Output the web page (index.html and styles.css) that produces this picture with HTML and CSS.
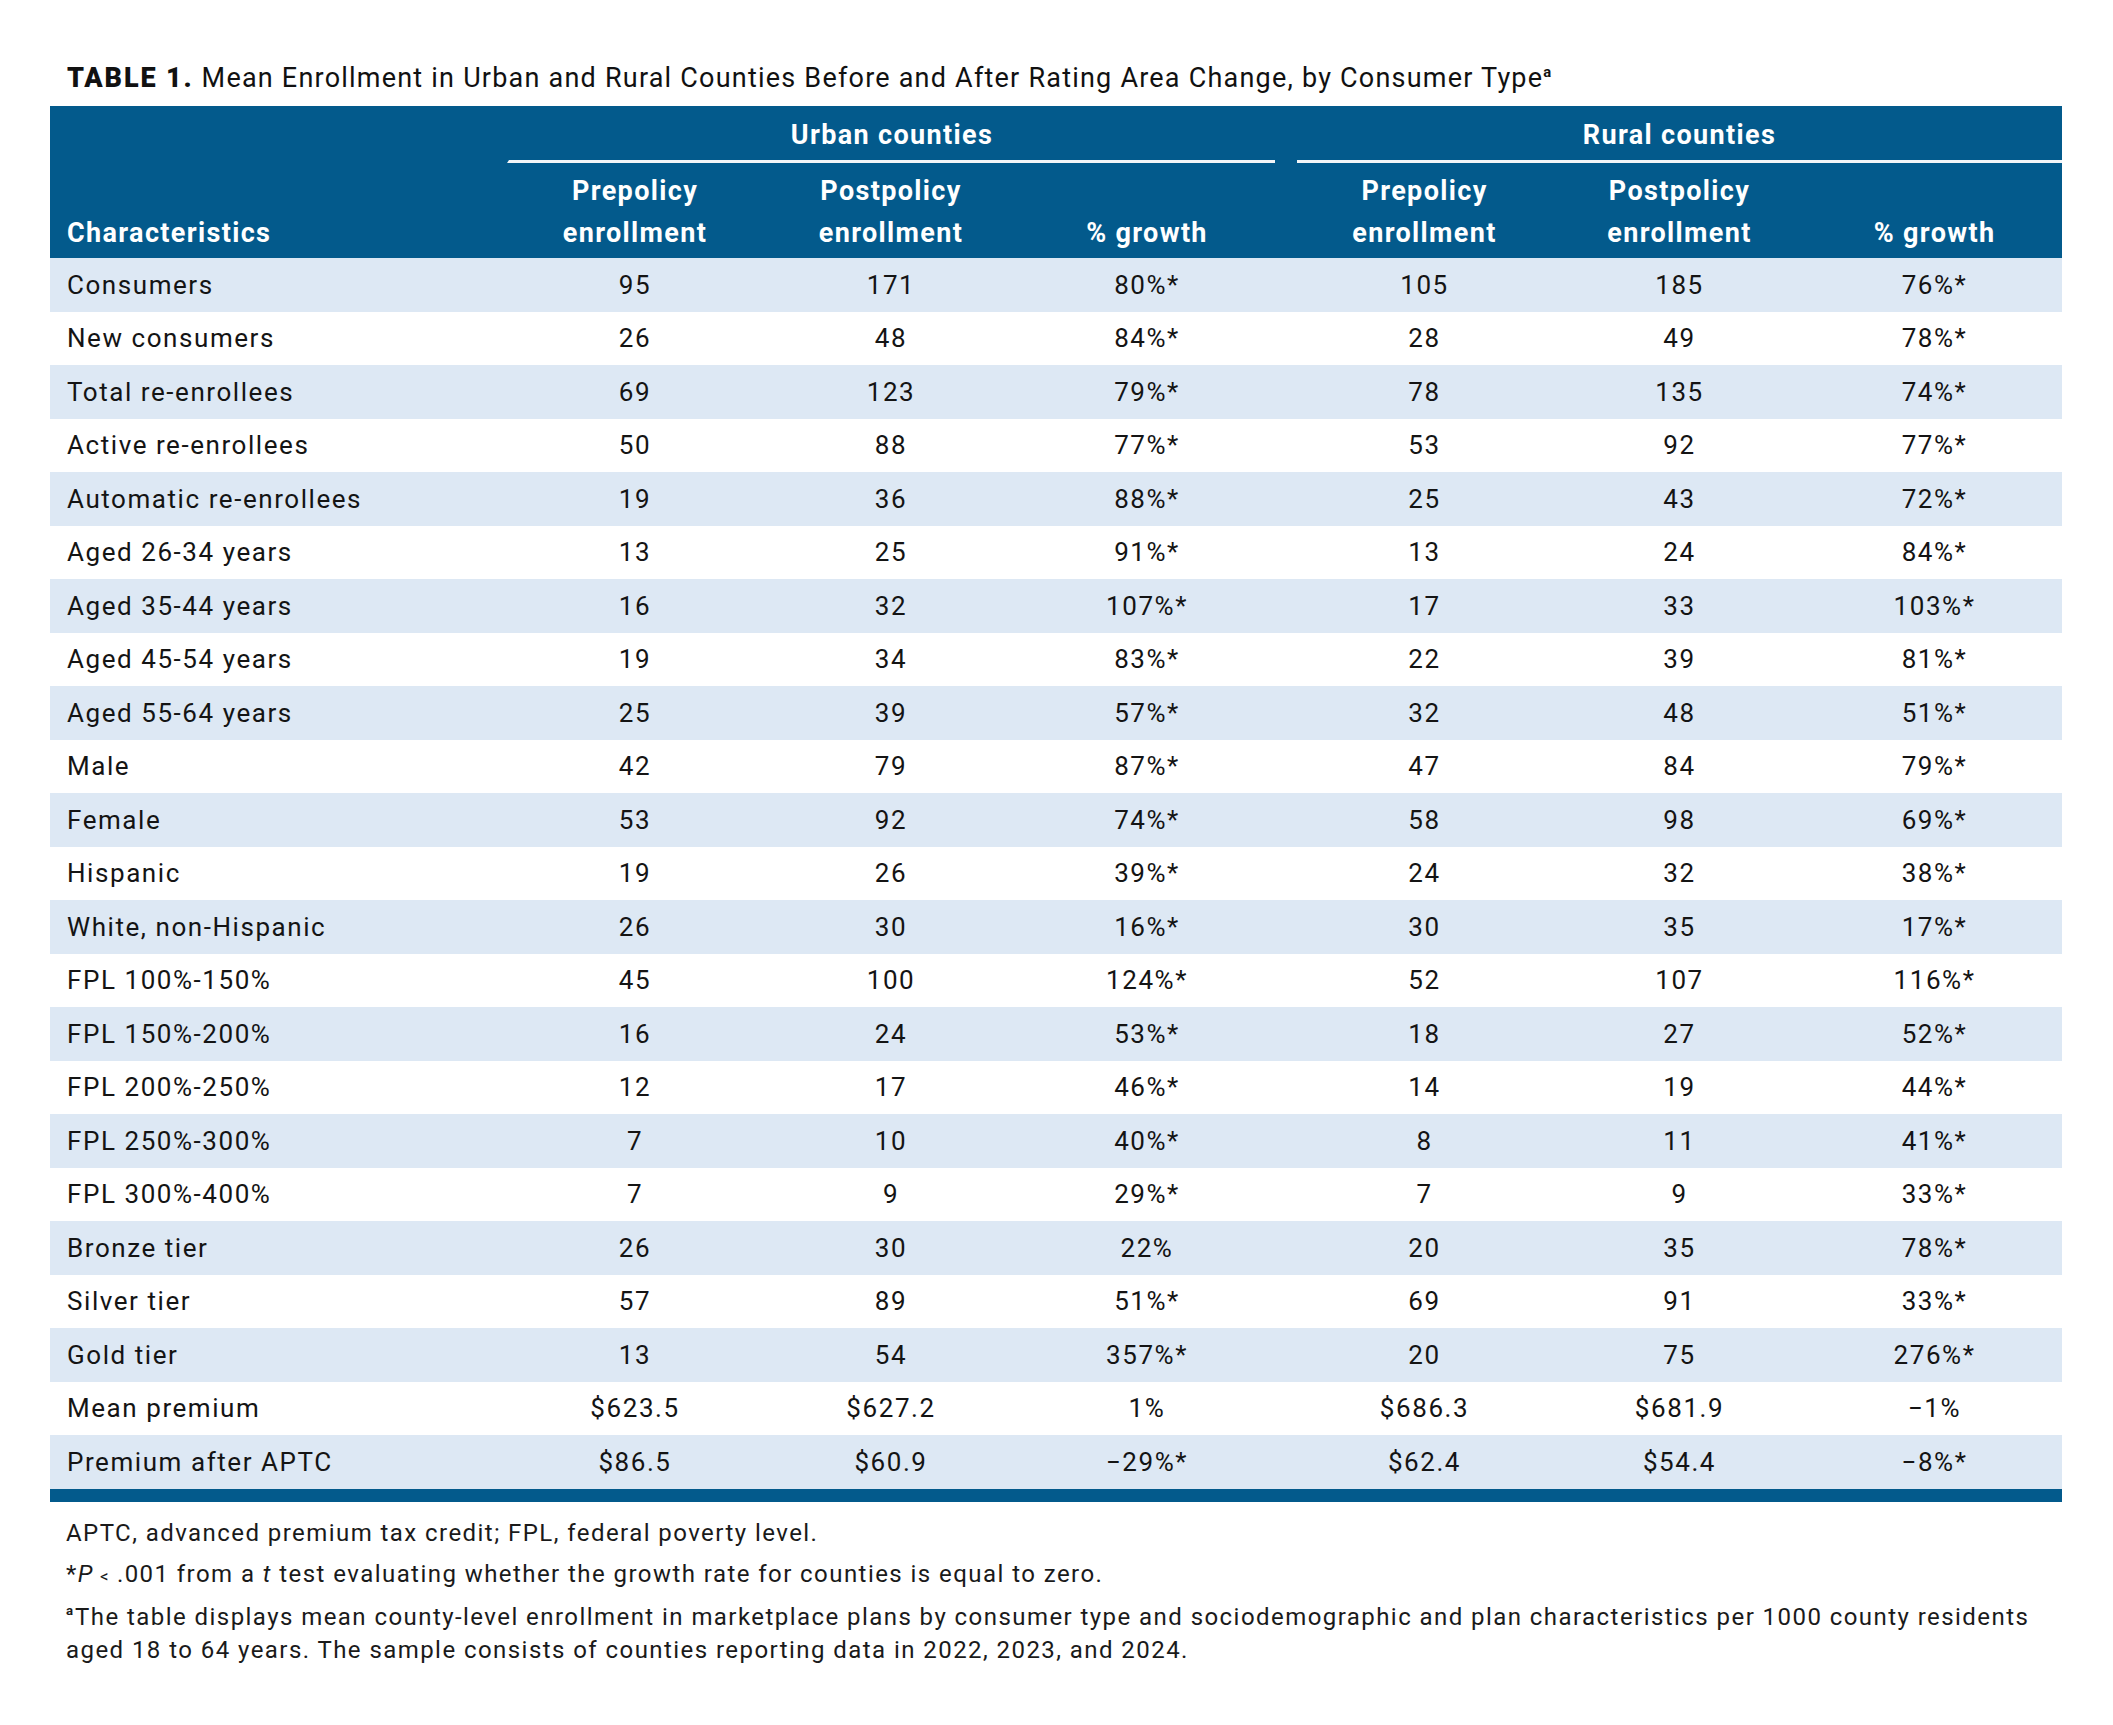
FILE: index.html
```html
<!DOCTYPE html>
<html lang="en">
<head>
<meta charset="utf-8">
<title>Table 1</title>
<link rel="stylesheet" href="styles.css">
</head>
<body>
<div class="page">
  <p class="title"><span class="tag">TABLE 1.</span> Mean Enrollment in Urban and Rural Counties Before and After Rating Area Change, by Consumer Type<sup class="fn">a</sup></p>
  <table class="data">
    <colgroup>
      <col class="c-label"><col class="c-num"><col class="c-num"><col class="c-num"><col class="c-gap"><col class="c-num2"><col class="c-num2"><col class="c-num2">
    </colgroup>
    <thead>
      <tr class="groups">
        <th></th>
        <th colspan="3" class="group group-urban">Urban counties</th>
        <th></th>
        <th colspan="3" class="group">Rural counties</th>
      </tr>
      <tr class="cols">
        <th class="label">Characteristics</th>
        <th>Prepolicy<br>enrollment</th>
        <th>Postpolicy<br>enrollment</th>
        <th>% growth</th>
        <th></th>
        <th>Prepolicy<br>enrollment</th>
        <th>Postpolicy<br>enrollment</th>
        <th>% growth</th>
      </tr>
    </thead>
    <tbody>
      <tr><td class="label">Consumers</td><td>95</td><td>171</td><td>80%*</td><td></td><td>105</td><td>185</td><td>76%*</td></tr>
      <tr><td class="label">New consumers</td><td>26</td><td>48</td><td>84%*</td><td></td><td>28</td><td>49</td><td>78%*</td></tr>
      <tr><td class="label">Total re-enrollees</td><td>69</td><td>123</td><td>79%*</td><td></td><td>78</td><td>135</td><td>74%*</td></tr>
      <tr><td class="label">Active re-enrollees</td><td>50</td><td>88</td><td>77%*</td><td></td><td>53</td><td>92</td><td>77%*</td></tr>
      <tr><td class="label">Automatic re-enrollees</td><td>19</td><td>36</td><td>88%*</td><td></td><td>25</td><td>43</td><td>72%*</td></tr>
      <tr><td class="label">Aged 26-34 years</td><td>13</td><td>25</td><td>91%*</td><td></td><td>13</td><td>24</td><td>84%*</td></tr>
      <tr><td class="label">Aged 35-44 years</td><td>16</td><td>32</td><td>107%*</td><td></td><td>17</td><td>33</td><td>103%*</td></tr>
      <tr><td class="label">Aged 45-54 years</td><td>19</td><td>34</td><td>83%*</td><td></td><td>22</td><td>39</td><td>81%*</td></tr>
      <tr><td class="label">Aged 55-64 years</td><td>25</td><td>39</td><td>57%*</td><td></td><td>32</td><td>48</td><td>51%*</td></tr>
      <tr><td class="label">Male</td><td>42</td><td>79</td><td>87%*</td><td></td><td>47</td><td>84</td><td>79%*</td></tr>
      <tr><td class="label">Female</td><td>53</td><td>92</td><td>74%*</td><td></td><td>58</td><td>98</td><td>69%*</td></tr>
      <tr><td class="label">Hispanic</td><td>19</td><td>26</td><td>39%*</td><td></td><td>24</td><td>32</td><td>38%*</td></tr>
      <tr><td class="label">White, non-Hispanic</td><td>26</td><td>30</td><td>16%*</td><td></td><td>30</td><td>35</td><td>17%*</td></tr>
      <tr><td class="label">FPL 100%-150%</td><td>45</td><td>100</td><td>124%*</td><td></td><td>52</td><td>107</td><td>116%*</td></tr>
      <tr><td class="label">FPL 150%-200%</td><td>16</td><td>24</td><td>53%*</td><td></td><td>18</td><td>27</td><td>52%*</td></tr>
      <tr><td class="label">FPL 200%-250%</td><td>12</td><td>17</td><td>46%*</td><td></td><td>14</td><td>19</td><td>44%*</td></tr>
      <tr><td class="label">FPL 250%-300%</td><td>7</td><td>10</td><td>40%*</td><td></td><td>8</td><td>11</td><td>41%*</td></tr>
      <tr><td class="label">FPL 300%-400%</td><td>7</td><td>9</td><td>29%*</td><td></td><td>7</td><td>9</td><td>33%*</td></tr>
      <tr><td class="label">Bronze tier</td><td>26</td><td>30</td><td>22%</td><td></td><td>20</td><td>35</td><td>78%*</td></tr>
      <tr><td class="label">Silver tier</td><td>57</td><td>89</td><td>51%*</td><td></td><td>69</td><td>91</td><td>33%*</td></tr>
      <tr><td class="label">Gold tier</td><td>13</td><td>54</td><td>357%*</td><td></td><td>20</td><td>75</td><td>276%*</td></tr>
      <tr><td class="label">Mean premium</td><td>$623.5</td><td>$627.2</td><td>1%</td><td></td><td>$686.3</td><td>$681.9</td><td>−1%</td></tr>
      <tr><td class="label">Premium after APTC</td><td>$86.5</td><td>$60.9</td><td>−29%*</td><td></td><td>$62.4</td><td>$54.4</td><td>−8%*</td></tr>
    </tbody>
    <tfoot>
      <tr class="bar"><td></td><td></td><td></td><td></td><td></td><td></td><td></td><td></td></tr>
    </tfoot>
  </table>
  <div class="notes">
    <p>APTC, advanced premium tax credit; FPL, federal poverty level.</p>
    <p>*<i>P</i><span class="lt">&lt;</span>.001 from a <i>t</i> test evaluating whether the growth rate for counties is equal to zero.</p>
    <p><sup class="fn fn-note">a</sup>The table displays mean county-level enrollment in marketplace plans by consumer type and sociodemographic and plan characteristics per 1000 county residents aged 18 to 64 years. The sample consists of counties reporting data in 2022, 2023, and 2024.</p>
  </div>
</div>
</body>
</html>
```
FILE: styles.css
```css
html, body {
  margin: 0;
  padding: 0;
  background: #ffffff;
}

body {
  font-family: Roboto, "Liberation Sans", sans-serif;
  color: #141414;
}

.page {
  padding: 62px 51px 40px 50px;
}

.title {
  margin: 0 0 11px 17px;
  font-size: 27px;
  line-height: 33px;
  letter-spacing: 0.045em;
  color: #111111;
}

.title .tag {
  font-weight: 900;
  letter-spacing: 0.07em;
}

.fn {
  font-size: 0.55em;
  font-weight: 700;
  vertical-align: 0.7em;
  line-height: 0;
  letter-spacing: 0;
}

.fn-note {
  margin-right: 2px;
}

.data {
  border-collapse: separate;
  border-spacing: 0;
  table-layout: fixed;
  width: 2012px;
}

.c-label { width: 457px; }
.c-num { width: 256px; }
.c-gap { width: 22px; }
.c-num2 { width: 255px; }

.data thead th {
  background: #035a8c;
  color: #ffffff;
  font-weight: 700;
  font-size: 27px;
  line-height: 42px;
  letter-spacing: 0.05em;
  text-align: center;
  padding: 0;
}

.data .groups th {
  padding: 8px 0 4px;
}

.data .groups th.group {
  border-bottom: 3px solid #f2f5f8;
}

.data .groups th.group-urban {
  border-left: 2px solid #035a8c;
}

.data .cols th {
  vertical-align: bottom;
  padding: 7px 0 4px;
}

.data .cols th.label {
  text-align: left;
  padding-left: 17px;
}

.data tbody td {
  height: 53.5px;
  padding: 0;
  font-size: 26px;
  line-height: 30px;
  letter-spacing: 0.06em;
  text-align: center;
  vertical-align: middle;
}

.data tbody tr:nth-child(odd) td {
  background: #dde8f4;
}

.data tbody td.label {
  text-align: left;
  padding-left: 17px;
}

.bar td {
  height: 13px;
  padding: 0;
  background: #035a8c;
}

.notes {
  margin: 15px 0 0 16px;
  font-size: 24px;
  line-height: 33px;
  letter-spacing: 0.06em;
  color: #1a1a1a;
  max-width: 1990px;
}

.notes p {
  margin: 0 0 8px;
}

.notes .lt {
  font-size: 0.7em;
  margin: 0 7px 0 6px;
}
```
